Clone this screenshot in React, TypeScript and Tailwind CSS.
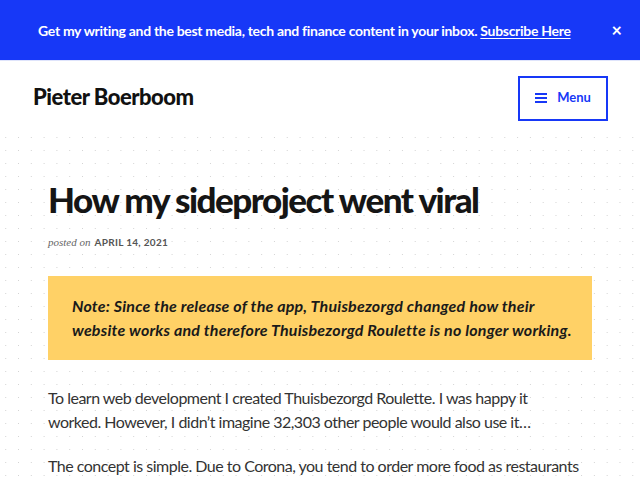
import React from "react";

export default function App() {
  return (
    <div className="w-[640px] h-[480px] overflow-hidden bg-white">
      <div className="h-[61px] bg-[#1738f7] flex items-center pl-[38px] pr-[18px] border-b border-[#dfe4fb]">
        <p className="flex-1 whitespace-nowrap text-white text-[14px] font-bold tracking-[-0.3px] font-['Lato',sans-serif]">
          Get my writing and the best media, tech and finance content in your inbox.{" "}
          <span className="underline underline-offset-2">Subscribe Here</span>
        </p>
        <span className="text-white text-[18px] font-bold font-['Lato',sans-serif]">×</span>
      </div>
      <div className="h-[70px] flex items-center justify-between pl-[33px] pr-[32px]">
        <h1 className="text-[22px] font-black text-[#111] font-['Lato',sans-serif] tracking-[-0.5px]">Pieter Boerboom</h1>
        <button className="mt-[4px] w-[90px] h-[45px] border-2 border-[#1738f7] flex items-center justify-center gap-[10px] text-[#1738f7] font-['Lato',sans-serif] font-bold text-[13px] tracking-[-0.1px]">
          <svg width="12" height="10" viewBox="0 0 12 10" fill="#1738f7">
            <rect x="0" y="0" width="12" height="2" />
            <rect x="0" y="4" width="12" height="2" />
            <rect x="0" y="8" width="12" height="2" />
          </svg>
          Menu
        </button>
      </div>
      <div className="h-[349px] px-[48px] pt-[46px] bg-[radial-gradient(circle,#d4d4d4_0.7px,transparent_0.9px)] bg-[length:12.8px_13px] bg-[position:-0.7px_0px]">
        <h2 className="text-[35px] font-black text-[#151515] font-['Lato',sans-serif] leading-[44px] tracking-[-1.5px]">
          How my sideproject went viral
        </h2>
        <div className="mt-[13px] flex items-baseline gap-[4px] text-[#666]">
          <span className="italic text-[11px] font-['Liberation_Serif',serif]">posted on</span>
          <span className="text-[10px] font-bold tracking-[0.3px] text-[#555] font-['Lato',sans-serif]">APRIL 14, 2021</span>
        </div>
        <div className="mt-[25px] bg-[#ffd166] px-[24px] py-[18px]">
          <p className="italic font-bold text-[16px] leading-[24px] tracking-[0.2px] text-[#1a1a1a] font-['Lato',sans-serif] whitespace-nowrap">
            Note: Since the release of the app, Thuisbezorgd changed how their
            <br />
            website works and therefore Thuisbezorgd Roulette is no longer working.
          </p>
        </div>
        <p className="mt-[26px] text-[16px] leading-[24px] tracking-[-0.5px] text-[#333] font-['Lato',sans-serif]">
          To learn web development I created Thuisbezorgd Roulette. I was happy it
          <br />
          worked. However, I didn’t imagine 32,303 other people would also use it…
        </p>
        <p className="mt-[20px] text-[16px] leading-[24px] tracking-[-0.5px] text-[#333] font-['Lato',sans-serif]">
          The concept is simple. Due to Corona, you tend to order more food as restaurants are closed.
        </p>
      </div>
    </div>
  );
}
